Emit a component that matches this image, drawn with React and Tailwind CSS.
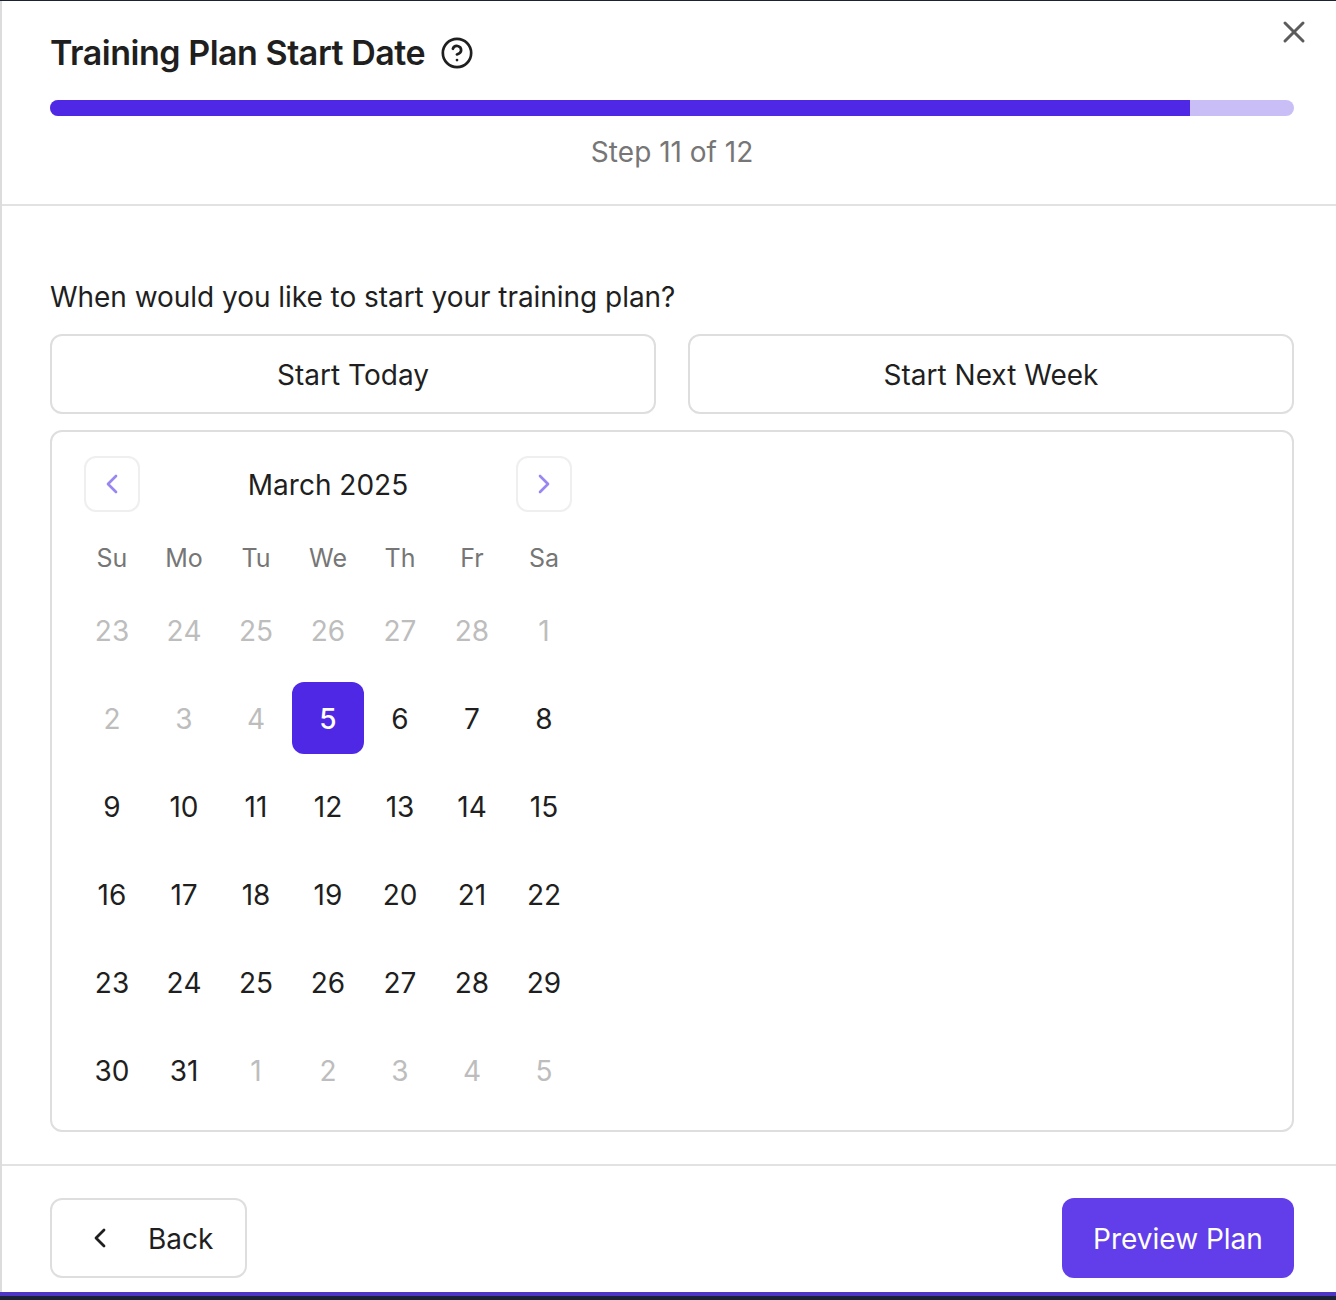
import { ChevronLeft, ChevronRight, CircleHelp, X } from 'lucide-react';

const weekdays = ['Su', 'Mo', 'Tu', 'We', 'Th', 'Fr', 'Sa'];

const muted = 'text-[#bdbdbd]';

const days = [
  ...[23, 24, 25, 26, 27, 28, 1, 2, 3, 4].map((d) => ({ d, off: true })),
  { d: 5, selected: true },
  ...[6, 7, 8, 9, 10, 11, 12, 13, 14, 15, 16, 17, 18, 19, 20, 21, 22, 23, 24, 25, 26, 27, 28, 29, 30, 31].map((d) => ({ d })),
  ...[1, 2, 3, 4, 5].map((d) => ({ d, off: true })),
];

export default function App() {
  return (
    <div className="h-[1300px] w-full flex flex-col bg-[#1a2233] font-['Inter',sans-serif] text-[#1f1f1f]">
      <div className="mt-px flex-1 flex flex-col bg-white border-l-2 border-[#dcdcdc] relative">
        {/* Header */}
        <div className="h-[205px] shrink-0 border-b-2 border-[#e2e2e2] pl-[48px] pr-[42px] pt-[31px]">
          <div className="flex items-center h-[42px]">
            <h1 className="text-[34px] leading-[42px] font-semibold tracking-[-0.475px]">Training Plan Start Date</h1>
            <CircleHelp className="w-[34px] h-[34px] ml-[15px]" strokeWidth={1.9} />
          </div>
          <div className="mt-[26px] h-4 rounded-full bg-[#c9bff6] overflow-hidden">
            <div className="h-full w-[91.65%] bg-[#4f28e6]"></div>
          </div>
          <p className="mt-[20px] text-center text-[28px] leading-[32px] text-[#767676] [font-kerning:none]">Step 11 of 12</p>
        </div>
        <button className="absolute top-[13px] right-[24px] text-[#5c5c5c]">
          <X className="w-9 h-9" strokeWidth={2} />
        </button>

        {/* Body */}
        <div className="flex-1 pl-[48px] pr-[42px] pt-[72px]">
          <p className="text-[28px] leading-[36px] tracking-[-0.04px] pt-px -mb-px">When would you like to start your training plan?</p>
          <div className="mt-[20px] grid grid-cols-2 gap-8">
            <button className="h-20 rounded-[12px] border-2 border-[#dedede] text-[28px] pt-0.5">Start Today</button>
            <button className="h-20 rounded-[12px] border-2 border-[#dedede] text-[28px] pt-0.5">Start Next Week</button>
          </div>

          {/* Calendar */}
          <div className="mt-4 h-[702px] rounded-[12px] border-2 border-[#dedede] pl-6 pt-6">
            <div className="w-[504px]">
              <div className="flex items-center justify-between h-14 px-2">
                <button className="w-14 h-14 flex items-center justify-center rounded-[12px] border-2 border-[#efefef] text-[#9a86f0]">
                  <ChevronLeft className="w-8 h-8" strokeWidth={2} />
                </button>
                <span className="text-[28px] pt-0.5">March 2025</span>
                <button className="w-14 h-14 flex items-center justify-center rounded-[12px] border-2 border-[#efefef] text-[#9a86f0]">
                  <ChevronRight className="w-8 h-8" strokeWidth={2} />
                </button>
              </div>
              <div className="mt-7 grid grid-cols-7">
                {weekdays.map((w) => (
                  <div key={w} className="h-9 flex items-center justify-center text-[25px] text-[#767676] pt-0.5">{w}</div>
                ))}
              </div>
              <div className="mt-[18px] grid grid-cols-7 gap-y-4">
                {days.map((day, i) => (
                  <div
                    key={i}
                    className={`h-[72px] flex items-center justify-center text-[28px] rounded-[12px] pt-0.5 [font-kerning:none] ${
                      day.selected ? 'bg-[#4f28e6] text-white font-medium' : day.off ? muted : ''
                    }`}
                  >
                    {day.d}
                  </div>
                ))}
              </div>
            </div>
          </div>
        </div>

        {/* Footer */}
        <div className="h-[128px] shrink-0 border-t-2 border-[#e2e2e2] pl-[48px] pr-[42px] pt-[32px] flex justify-between">
          <button className="h-20 w-[197px] rounded-[12px] border-2 border-[#dedede] flex items-center pl-[32px] text-[28px]">
            <ChevronLeft className="w-8 h-8" strokeWidth={2.1} />
            <span className="ml-[32px] pt-0.5">Back</span>
          </button>
          <button className="h-20 w-[232px] rounded-[12px] bg-[#623eea] text-white text-[28px] pt-0.5">Preview Plan</button>
        </div>
      </div>
      <div className="h-1 shrink-0 bg-[#4f35c4]"></div>
      <div className="h-1 shrink-0"></div>
    </div>
  );
}
